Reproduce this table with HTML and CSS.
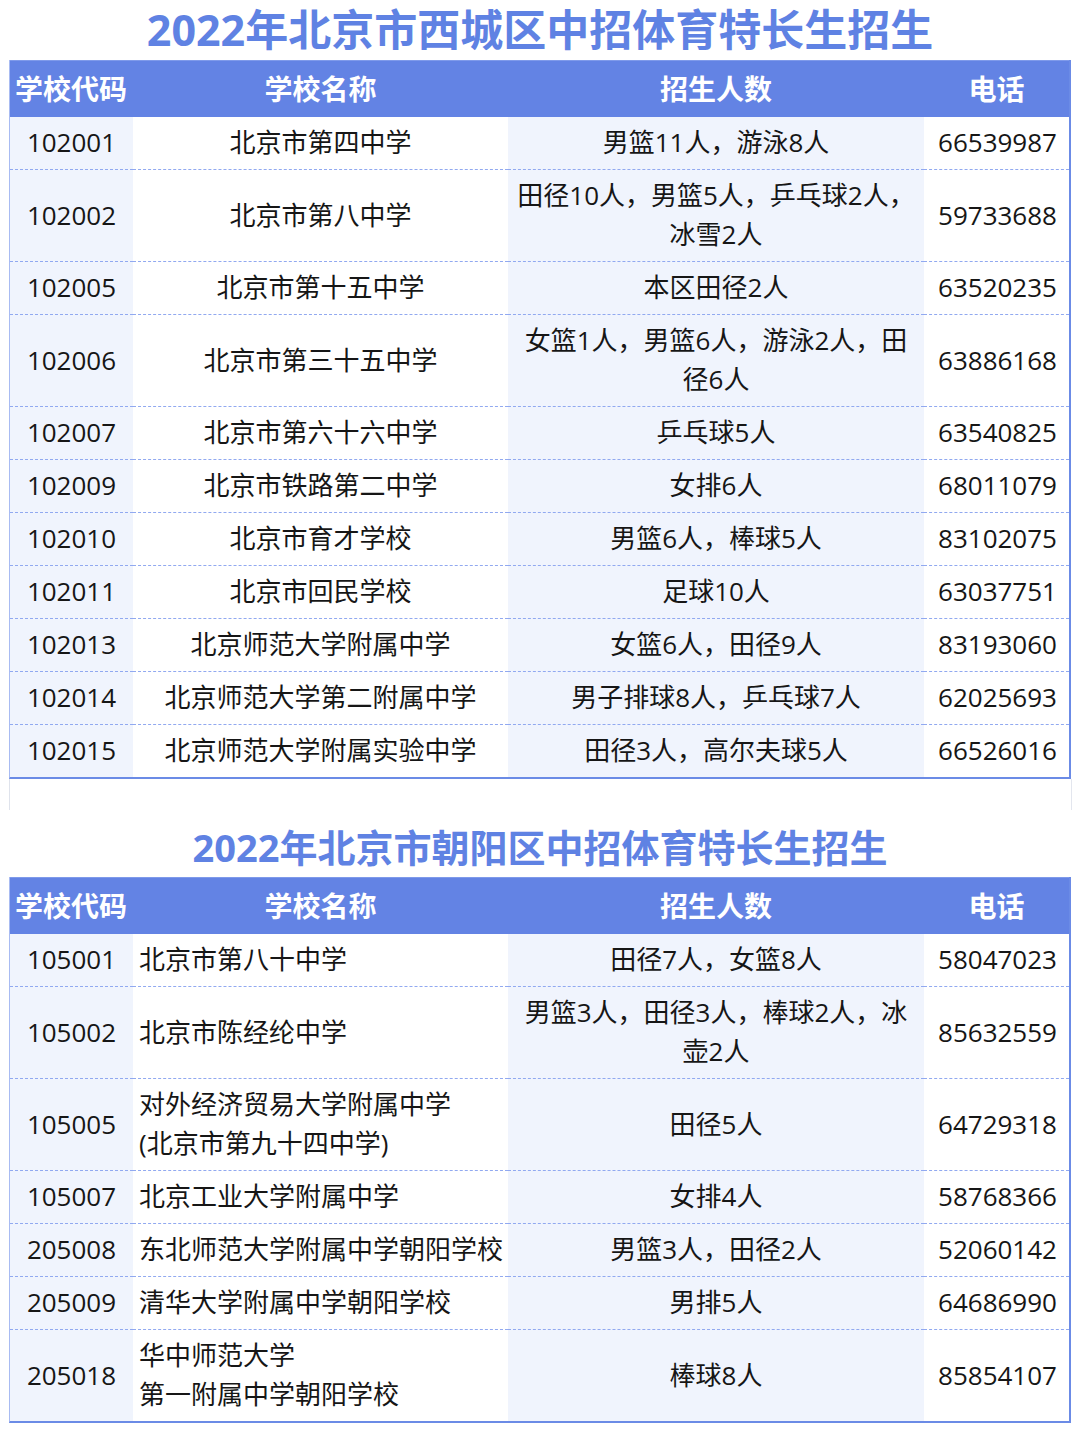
FILE: index.html
```html
<!DOCTYPE html>
<html lang="zh-CN">
<head>
<meta charset="utf-8">
<title>2022年北京市中招体育特长生招生</title>
<link rel="stylesheet" href="styles.css">
</head>
<body>
<section class="sec sec-first">
  <h1 class="title title-1">2022年北京市西城区中招体育特长生招生</h1>
  <table class="tbl">
    <colgroup><col class="c1"><col class="c2"><col class="c3"><col class="c4"></colgroup>
    <thead>
      <tr><th class="h-code">学校代码</th><th>学校名称</th><th>招生人数</th><th>电话</th></tr>
    </thead>
    <tbody>
      <tr><td>102001</td><td>北京市第四中学</td><td>男篮11人，游泳8人</td><td>66539987</td></tr>
      <tr><td>102002</td><td>北京市第八中学</td><td>田径10人，男篮5人，乒乓球2人，冰雪2人</td><td>59733688</td></tr>
      <tr><td>102005</td><td>北京市第十五中学</td><td>本区田径2人</td><td>63520235</td></tr>
      <tr><td>102006</td><td>北京市第三十五中学</td><td>女篮1人，男篮6人，游泳2人，田径6人</td><td>63886168</td></tr>
      <tr><td>102007</td><td>北京市第六十六中学</td><td>乒乓球5人</td><td>63540825</td></tr>
      <tr><td>102009</td><td>北京市铁路第二中学</td><td>女排6人</td><td>68011079</td></tr>
      <tr><td>102010</td><td>北京市育才学校</td><td>男篮6人，棒球5人</td><td>83102075</td></tr>
      <tr><td>102011</td><td>北京市回民学校</td><td>足球10人</td><td>63037751</td></tr>
      <tr><td>102013</td><td>北京师范大学附属中学</td><td>女篮6人，田径9人</td><td>83193060</td></tr>
      <tr><td>102014</td><td>北京师范大学第二附属中学</td><td>男子排球8人，乒乓球7人</td><td>62025693</td></tr>
      <tr><td>102015</td><td>北京师范大学附属实验中学</td><td>田径3人，高尔夫球5人</td><td>66526016</td></tr>
    </tbody>
  </table>
  <div class="spacer"></div>
</section>
<section class="sec">
  <h1 class="title title-2">2022年北京市朝阳区中招体育特长生招生</h1>
  <table class="tbl tbl-left">
    <colgroup><col class="c1"><col class="c2"><col class="c3"><col class="c4"></colgroup>
    <thead>
      <tr><th class="h-code">学校代码</th><th>学校名称</th><th>招生人数</th><th>电话</th></tr>
    </thead>
    <tbody>
      <tr><td>105001</td><td>北京市第八十中学</td><td>田径7人，女篮8人</td><td>58047023</td></tr>
      <tr><td>105002</td><td>北京市陈经纶中学</td><td>男篮3人，田径3人，棒球2人，冰壶2人</td><td>85632559</td></tr>
      <tr><td>105005</td><td>对外经济贸易大学附属中学<br>(北京市第九十四中学)</td><td>田径5人</td><td>64729318</td></tr>
      <tr><td>105007</td><td>北京工业大学附属中学</td><td>女排4人</td><td>58768366</td></tr>
      <tr><td>205008</td><td>东北师范大学附属中学朝阳学校</td><td>男篮3人，田径2人</td><td>52060142</td></tr>
      <tr><td>205009</td><td>清华大学附属中学朝阳学校</td><td>男排5人</td><td>64686990</td></tr>
      <tr><td>205018</td><td>华中师范大学<br>第一附属中学朝阳学校</td><td>棒球8人</td><td>85854107</td></tr>
    </tbody>
  </table>
</section>
</body>
</html>
```

FILE: styles.css
```css
html, body {
  margin: 0;
  padding: 0;
  background: #ffffff;
}
body {
  width: 1080px;
  font-family: "Open Sans", "Noto Sans CJK SC", sans-serif;
  color: #161616;
}
.sec {
  padding-left: 9px;
  width: 1062px;
}
.title {
  margin: 0;
  text-align: center;
  font-weight: 700;
  color: #5f82e3;
  white-space: nowrap;
}
.title-1 {
  font-size: 43px;
  line-height: 60px;
  height: 60px;
}
.title-2 {
  font-size: 38px;
  line-height: 60px;
  height: 60px;
  padding-top: 7px;
}
.tbl {
  width: 1061px;
  border-collapse: separate;
  border-spacing: 0;
  table-layout: fixed;
  border-left: 1px solid #a8bbf2;
  border-right: 2px solid #6b8be6;
  border-bottom: 2px solid #6b8be6;
  font-size: 26px;
}
.c1 { width: 123px; }
.c2 { width: 375px; }
.c3 { width: 416px; }
.c4 { width: 145px; }
.tbl th {
  background: #6383e4;
  color: #ffffff;
  font-size: 28px;
  font-weight: 700;
  height: 56px;
  box-sizing: border-box;
  padding: 0 6px;
  text-align: center;
  line-height: 56px;
  border-top: 1px solid #7f9aea;
}
.tbl th.h-code {
  text-align: left;
  padding-left: 5px;
  white-space: nowrap;
}
.tbl td {
  padding: 6px 6px 7px;
  line-height: 39px;
  text-align: center;
  border-bottom: 1px dashed #91a9f0;
  vertical-align: middle;
}
.tbl tbody tr:last-child td {
  border-bottom: none;
}
.tbl td:nth-child(1),
.tbl td:nth-child(3) {
  background: #f0f4fd;
}
.tbl td:nth-child(4) {
  padding-left: 4px;
  padding-right: 2px;
}
.tbl-left td:nth-child(2) {
  text-align: left;
  white-space: nowrap;
  padding-right: 0;
}
.spacer {
  height: 31px;
  border-left: 1px solid #dfe3ec;
  border-right: 1px solid #e3e6ee;
  width: 1061px;
}
```
